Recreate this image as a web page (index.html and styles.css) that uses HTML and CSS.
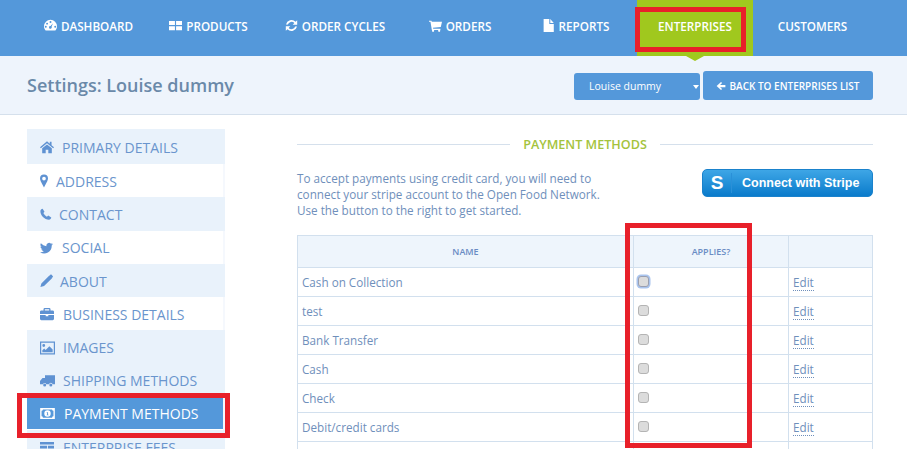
FILE: index.html
```html
<!DOCTYPE html>
<html lang="en">
<head>
    <meta charset="UTF-8">
    <meta name="viewport" content="width=device-width, initial-scale=1.0">
    <title>Settings: Louise dummy</title>
    <link rel="stylesheet" href="styles.css">
</head>
<body>

    <nav class="topnav">
        <a class="nav-item nav-dashboard" href="#">
            <svg class="nav-icon" viewBox="0 0 16 16"><path fill-rule="evenodd" d="M2 14C.7 12.800 0 11 0 9a8 8 0 0 1 16 0c0 2-.7 3.800-2 5zM8 2.600a1.200 1.200 0 1 0 0 2.400 1.200 1.200 0 0 0 0-2.400zM3.800 4.500a1.200 1.200 0 1 0 0 2.400 1.200 1.200 0 0 0 0-2.400zM2.200 8.300a1.200 1.200 0 1 0 0 2.400 1.200 1.200 0 0 0 0-2.400zM13.800 8.300a1.200 1.200 0 1 0 0 2.400 1.200 1.200 0 0 0 0-2.400zM11 5.200 8.100 8.600a1.700 1.700 0 1 0 1.300 1z"/></svg>
            DASHBOARD
        </a>
        <a class="nav-item nav-products" href="#">
            <svg class="nav-icon" viewBox="0 0 16 16"><path d="M0 2.500h7.300v5H0zM8.700 2.500H16v5H8.700zM0 8.800h7.300v5H0zM8.700 8.800H16v5H8.700z"/></svg>
            PRODUCTS
        </a>
        <a class="nav-item nav-cycles" href="#">
            <svg class="nav-icon" viewBox="0 0 16 16"><path d="M15 1.500V7H9.500l2-2A4.800 4.800 0 0 0 3.500 6.800H1.200A7 7 0 0 1 13 3.400zM1 14.500V9h5.500l-2 2a4.800 4.800 0 0 0 8-1.800h2.300A7 7 0 0 1 3 12.600z"/></svg>
            ORDER CYCLES
        </a>
        <a class="nav-item nav-orders" href="#">
            <svg class="nav-icon" viewBox="0 0 16 16"><path d="M0 2h3l.5 1.500H16l-1.500 6.300-9.600 1 .3 1.200H14v1.500H3.500L1.800 3.500H0z"/><circle cx="5" cy="14.500" r="1.400"/><circle cx="12.500" cy="14.500" r="1.400"/></svg>
            ORDERS
        </a>
        <a class="nav-item nav-reports" href="#">
            <svg class="nav-icon" viewBox="0 0 16 16"><path d="M2 0h7v6h5.500v10H2zM10.200 0l4.300 4.800h-4.300z"/></svg>
            REPORTS
        </a>
        <a class="nav-item nav-enterprises active" href="#">ENTERPRISES</a>
        <a class="nav-item nav-customers" href="#">CUSTOMERS</a>
    </nav>

    <header class="subheader">
        <h1>Settings: Louise dummy</h1>
        <div class="subheader-actions">
            <div class="select-btn">Louise dummy<span class="caret"></span></div>
            <a class="back-btn" href="#">
                <svg class="back-icon" viewBox="0 0 16 16"><path d="M8 1.500 1 8l7 6.500 1.800-1.800L6.500 9.800H15V6.200H6.500l3.300-2.900z"/></svg>
                BACK TO ENTERPRISES LIST
            </a>
        </div>
    </header>

    <div class="content">
        <ul class="side-menu">
            <li class="side-item shaded"><svg class="side-icon icon-home" viewBox="0 0 16 16"><path d="M8 1.500 0 8.200l1 1.200L8 3.600l7 5.800 1-1.200-2.800-2.300V2h-2v2.200zM2.500 9.500 8 5l5.500 4.500V15H9.500v-4h-3v4h-4z"/></svg>PRIMARY DETAILS</li>
            <li class="side-item"><svg class="side-icon icon-pin" viewBox="0 0 10 16"><path fill-rule="evenodd" d="M5 0a5 5 0 0 1 5 5c0 2.500-3 7.500-5 11C3 12.500 0 7.500 0 5a5 5 0 0 1 5-5zm0 2.700a2.300 2.300 0 1 0 0 4.600 2.300 2.300 0 0 0 0-4.600z"/></svg>ADDRESS</li>
            <li class="side-item shaded"><svg class="side-icon icon-phone" viewBox="0 0 16 16"><path d="M3.500 1 6 5 4.500 6.800c.8 2 2.700 3.900 4.700 4.700L11 10l4 2.500c0 1.500-1.500 3-3 3C6 15.500.5 10 .5 4c0-1.500 1.500-3 3-3z"/></svg>CONTACT</li>
            <li class="side-item"><svg class="side-icon icon-twitter" viewBox="0 0 16 16"><path d="M16 3.200c-.6.300-1.200.4-1.900.5.700-.4 1.200-1 1.400-1.800-.6.400-1.300.6-2 .8a3.300 3.300 0 0 0-5.600 3A9.300 9.300 0 0 1 1.100 2.300a3.300 3.300 0 0 0 1 4.400c-.5 0-1-.2-1.500-.4 0 1.600 1.100 3 2.600 3.300-.5.100-1 .1-1.500 0 .4 1.300 1.600 2.200 3.100 2.300A6.600 6.600 0 0 1 0 13.200a9.300 9.300 0 0 0 14.400-8.300c.6-.4 1.200-1 1.600-1.700z"/></svg>SOCIAL</li>
            <li class="side-item shaded"><svg class="side-icon icon-pencil" viewBox="0 0 16 16"><path d="M11.500 1.200 14.800 4.500 5 14.300.5 15.500 1.700 11zM12.500.5c.6-.6 1.300-.6 1.800-.1l1.300 1.300c.5.500.5 1.200-.1 1.800l-.9.900-3-3z"/></svg>ABOUT</li>
            <li class="side-item"><svg class="side-icon icon-case" viewBox="0 0 16 14"><path fill-rule="evenodd" d="M5 0h6l1 1v2h2.500c.8 0 1.500.7 1.500 1.500V7H0V4.500C0 3.700.7 3 1.500 3H4V1zm.5 1.500V3h5V1.500zM0 8h6.500v1.500h3V8H16v4.500c0 .8-.7 1.500-1.500 1.500h-13C.7 14 0 13.300 0 12.500z"/></svg>BUSINESS DETAILS</li>
            <li class="side-item shaded"><svg class="side-icon icon-image" viewBox="0 0 16 14"><path fill-rule="evenodd" d="M0 0h16v14H0zm1.300 1.300v11.400h13.400V1.300zM4 2.800a1.500 1.500 0 1 1 0 3 1.500 1.500 0 0 1 0-3zM2.500 11.500V9.500l2-2 1.500 1.500 4-4 3.500 3.500v3z"/></svg>IMAGES</li>
            <li class="side-item shaded"><svg class="side-icon icon-truck" viewBox="0 0 18 14"><path d="M6 0h12v11h-3a2 2 0 0 0-4 0H7.500a2 2 0 0 0-3.800-.2L0 11V7l3-3.500h3z"/><circle cx="5.600" cy="11.800" r="1.800"/><circle cx="13" cy="11.800" r="1.800"/></svg>SHIPPING METHODS</li>
            <li class="side-item selected"><svg class="side-icon icon-money" viewBox="0 0 16 12"><path fill-rule="evenodd" d="M0 0h16v12H0zm3 1.500A1.500 1.500 0 0 1 1.500 3v6A1.500 1.500 0 0 1 3 10.500h10A1.500 1.500 0 0 1 14.500 9V3A1.500 1.500 0 0 1 13 1.500zM8 2.500a3.500 3.500 0 1 1 0 7 3.500 3.500 0 0 1 0-7zM7 4.500v.8h.6v2H7v.7h2.200v-.7h-.6V4.500z"/></svg>PAYMENT METHODS</li>
            <li class="side-item shaded"><svg class="side-icon icon-fees" viewBox="0 0 16 14"><path d="M0 0h16v3H0zM0 4.500h8v3H0zM9 4.500h7v3H9zM0 9h16v3H0z"/></svg>ENTERPRISE FEES</li>
        </ul>

        <main class="panel">
            <div class="panel-title"><span>PAYMENT METHODS</span></div>

            <div class="stripe-row">
                <p>To accept payments using credit card, you will need to<br>connect your stripe account to the Open Food Network.<br>Use the button to the right to get started.</p>
                <a class="stripe-btn" href="#"><span class="stripe-s">S</span>Connect with Stripe</a>
            </div>

            <table class="methods">
                <thead>
                    <tr><th class="col-name">NAME</th><th class="col-applies">APPLIES?</th><th class="col-edit"></th></tr>
                </thead>
                <tbody>
                    <tr><td>Cash on Collection</td><td><input class="focused" type="checkbox"></td><td><a href="#">Edit</a></td></tr>
                    <tr><td>test</td><td><input type="checkbox"></td><td><a href="#">Edit</a></td></tr>
                    <tr><td>Bank Transfer</td><td><input type="checkbox"></td><td><a href="#">Edit</a></td></tr>
                    <tr><td>Cash</td><td><input type="checkbox"></td><td><a href="#">Edit</a></td></tr>
                    <tr><td>Check</td><td><input type="checkbox"></td><td><a href="#">Edit</a></td></tr>
                    <tr><td>Debit/credit cards</td><td><input type="checkbox"></td><td><a href="#">Edit</a></td></tr>
                    <tr><td></td><td></td><td></td></tr>
                </tbody>
            </table>
        </main>
    </div>

    <!-- red annotation boxes drawn over the screenshot -->
    <div class="mark mark-nav"></div>
    <div class="mark mark-side"></div>
    <div class="mark mark-col"></div>

</body>
</html>
```

FILE: styles.css
```css
html, body {
    height: 449px;
    overflow: hidden;
}

body {
    font-family: 'Open Sans', sans-serif;
    background-color: #fff;
    color: #6788b8;
    margin: 0;
    padding: 0;
    position: relative;
}

a {
    text-decoration: none;
    color: inherit;
}

/* top nav */
.topnav {
    display: flex;
    height: 56px;
    padding-left: 24px;
    background-color: #5498da;
}

.nav-item {
    position: relative;
    display: flex;
    align-items: center;
    justify-content: center;
    gap: 4px;
    color: #fff;
    font-size: 11.700px;
    font-weight: 600;
    padding-bottom: 5px;
    box-sizing: border-box;
}

.nav-dashboard { width: 129px; }
.nav-products { width: 111px; }
.nav-cycles { width: 142px; }
.nav-orders { width: 108px; }
.nav-reports { width: 123px; }
.nav-enterprises { width: 116px; }
.nav-customers { width: 119px; }

.nav-icon {
    width: 13px;
    height: 13px;
    fill: #fff;
}

.nav-item.active {
    background-color: #a0c81e;
}

.nav-item.active::after {
    content: "";
    position: absolute;
    top: 56px;
    left: 50%;
    margin-left: -9px;
    border-left: 9px solid transparent;
    border-right: 9px solid transparent;
    border-top: 5px solid #a0c81e;
}

/* settings bar */
.subheader {
    display: flex;
    justify-content: space-between;
    align-items: center;
    height: 58px;
    padding: 0 34px 0 27px;
    background-color: #eef4fc;
    border-bottom: 1px solid #d5e0ec;
}

.subheader h1 {
    margin: 0;
    font-size: 18px;
    font-weight: 600;
    color: #6a89a9;
}

.subheader-actions {
    display: flex;
    align-items: flex-end;
    gap: 3px;
    padding-top: 1px;
}

.select-btn {
    position: relative;
    width: 126px;
    height: 27px;
    line-height: 26px;
    padding-left: 15px;
    box-sizing: border-box;
    background-color: #5498da;
    border-radius: 3px;
    color: #fff;
    font-size: 10.500px;
}

.caret {
    position: absolute;
    right: 1px;
    top: 12px;
    border-left: 3.500px solid transparent;
    border-right: 3.500px solid transparent;
    border-top: 4px solid #fff;
}

.back-btn {
    display: flex;
    align-items: center;
    justify-content: center;
    gap: 3px;
    width: 170px;
    height: 29px;
    background-color: #5498da;
    border-radius: 3px;
    color: #fff;
    font-size: 10px;
    font-weight: 600;
}

.back-icon {
    width: 10px;
    height: 10px;
    fill: #fff;
}

/* main area */
.content {
    display: flex;
    align-items: flex-start;
    padding: 14px 0 0 27px;
}

.side-menu {
    list-style: none;
    width: 198px;
    margin: 0 72px 0 0;
    padding: 0;
    background-color: #f5f8fd;
    flex-shrink: 0;
}

.side-item {
    display: flex;
    align-items: center;
    height: 33.300px;
    padding: 1px 0 0 13px;
    margin-right: 2px;
    box-sizing: border-box;
    background-color: #fff;
    color: #6a95cd;
    font-size: 14px;
}

.side-item:first-child {
    height: 35px;
}

.side-item.shaded {
    background-color: #e9f2fb;
    margin-right: 0;
}

.side-item.selected {
    background-color: #5498da;
    border-bottom: 1px solid #fff;
    color: #fff;
}

.side-icon {
    height: 14px;
    fill: #5f92d2;
    flex-shrink: 0;
}

.selected .side-icon {
    fill: #fff;
}

.icon-home { width: 14px; margin-right: 8px; }
.icon-pin { width: 8px; margin-right: 8px; }
.icon-phone { width: 12px; margin-right: 7px; }
.icon-twitter { width: 13px; margin-right: 9px; }
.icon-pencil { width: 13px; margin-right: 7px; }
.icon-case { width: 14px; margin-right: 9px; }
.icon-image { width: 15px; margin-right: 8px; }
.icon-truck { width: 15px; margin-right: 8px; }
.icon-money { width: 15px; margin-right: 9px; height: 11px; }
.icon-fees { width: 14px; margin-right: 9px; }

.panel {
    width: 576px;
    flex-shrink: 0;
}

.panel-title {
    display: flex;
    align-items: center;
    gap: 13px;
    height: 30px;
    color: #a4c33c;
    font-size: 12.600px;
    font-weight: 600;
}

.panel-title::before,
.panel-title::after {
    content: "";
    flex: 1;
    height: 1px;
    background-color: #d5e0ec;
}

.stripe-row {
    display: flex;
    justify-content: space-between;
    align-items: flex-start;
    margin-top: 10px;
    height: 66px;
}

.stripe-row p {
    margin: 1px 0 0;
    font-size: 11.700px;
    line-height: 16px;
    color: #6f8fbb;
}

.stripe-btn {
    display: flex;
    align-items: center;
    width: 171px;
    height: 28px;
    box-sizing: border-box;
    background: linear-gradient(#3ea6e6, #0a7bcb);
    border: 1px solid #1a82cc;
    border-radius: 5px;
    color: #fff;
    font-family: 'Liberation Sans', sans-serif;
    font-size: 12.500px;
    font-weight: bold;
}

.stripe-s {
    width: 29px;
    margin-right: 10px;
    line-height: 20px;
    border-right: 1px solid #2a90d8;
    text-align: center;
    font-size: 19px;
    box-sizing: border-box;
}

.methods {
    width: 576px;
    table-layout: fixed;
    border-collapse: collapse;
}

.methods th,
.methods td {
    border: 1px solid #d2e0ee;
    padding: 0 4px;
}

.methods th {
    height: 32px;
    box-sizing: border-box;
    background-color: #eef5fc;
    font-size: 9px;
    font-weight: 600;
    color: #6a8cc4;
}

.col-name { width: 336px; }
.col-applies { width: 155px; }

.methods td {
    height: 29px;
    box-sizing: border-box;
    font-size: 11.700px;
    color: #6f8fbb;
}

.methods td a {
    border-bottom: 1px dotted #6f8fbb;
}

.methods input {
    appearance: none;
    display: block;
    width: 11px;
    height: 11px;
    box-sizing: border-box;
    margin: 0 0 1px 0;
    background-color: #dcdcdc;
    border: 1px solid #b4b4b4;
    border-radius: 3px;
}

.methods input.focused {
    border-color: #9a9fb0;
    box-shadow: 0 0 0 1.500px #a9c4ee;
}

/* red boxes */
.mark {
    position: absolute;
    box-sizing: border-box;
    border: 5px solid #e8202a;
}

.mark-nav {
    left: 635px;
    top: 7px;
    width: 111px;
    height: 45px;
}

.mark-side {
    left: 17px;
    top: 393px;
    width: 213px;
    height: 45px;
}

.mark-col {
    left: 625px;
    top: 223px;
    width: 127px;
    height: 225px;
}
```
